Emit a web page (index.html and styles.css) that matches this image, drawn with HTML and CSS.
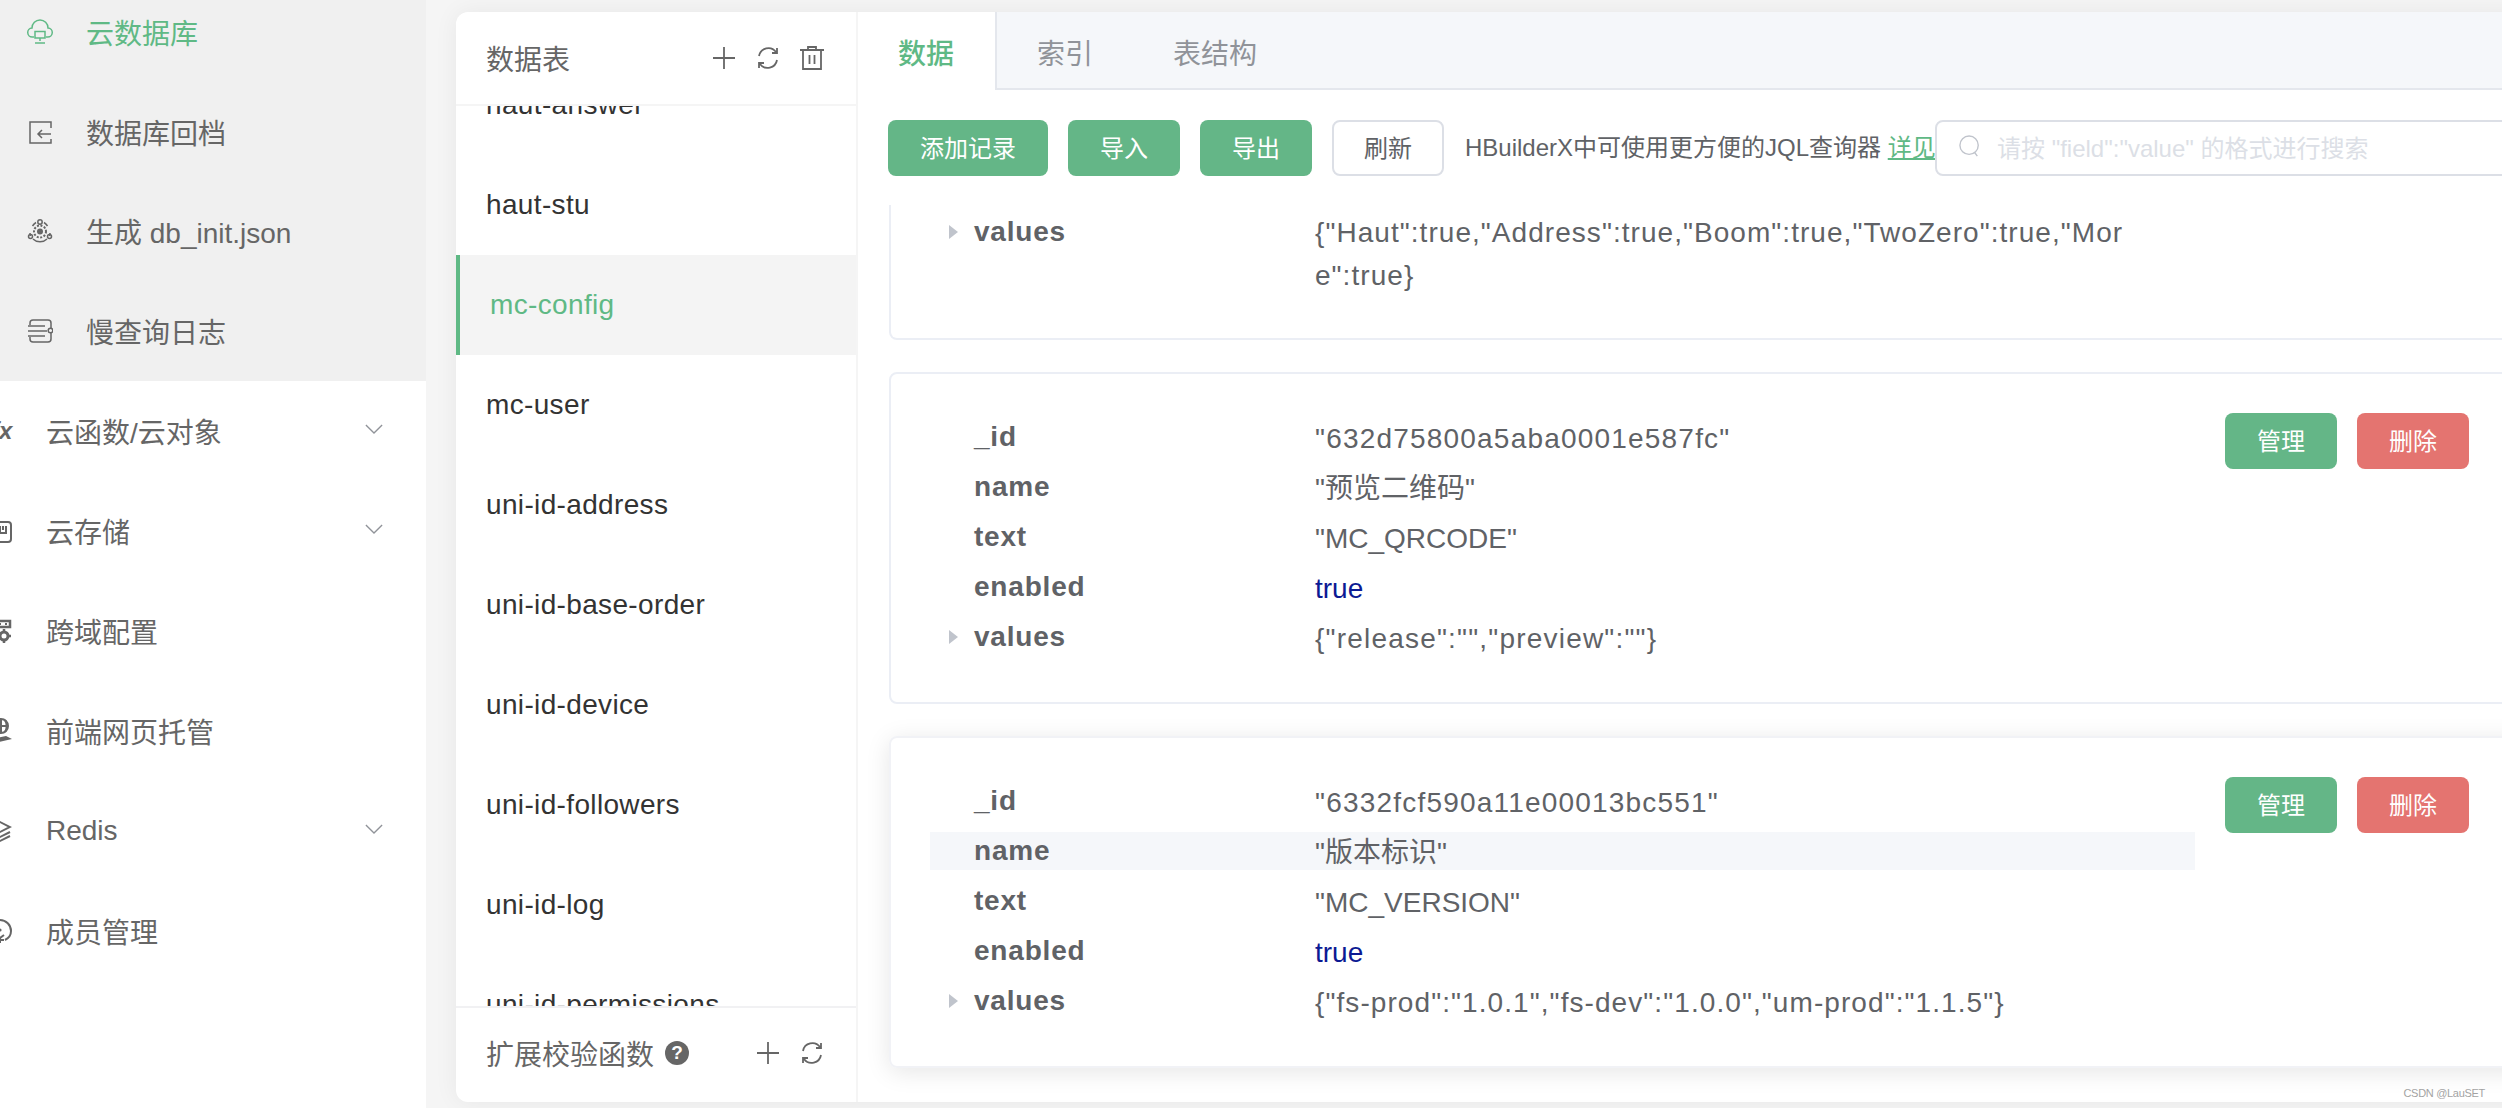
FILE: index.html
```html
<!DOCTYPE html>
<html lang="zh-CN">
<head>
    <meta charset="UTF-8">
    <title>云数据库</title>
    <link rel="stylesheet" href="styles.css">
</head>
<body>
    <div class="page">
        <!-- Left menu, scrolled a little in both directions -->
        <aside class="sidebar">
            <ul class="sub-menu">
                <li class="sub-item active">
                    <svg class="sub-icon" viewBox="0 0 26 26"><path d="M7 18H5.500a4.500 4.500 0 0 1-.5-9 8 8 0 0 1 16 0 4.500 4.500 0 0 1-.5 9H19"/><rect x="8" y="12.500" width="10" height="6.500"/><path d="M13 19v3M8 24h10"/></svg>
                    <span>云数据库</span>
                </li>
                <li class="sub-item">
                    <svg class="sub-icon" viewBox="0 0 26 26"><path d="M24 9V3H3v21h21v-4"/><path d="M24 15H11M15 11l-4 4 4 4"/></svg>
                    <span>数据库回档</span>
                </li>
                <li class="sub-item">
                    <svg class="sub-icon" viewBox="0 0 26 26"><path d="M5.500 8A10 10 0 0 1 9 4.500M17 4.500A10 10 0 0 1 20.500 8M3 15a10 10 0 0 0 .5 3M6 21a10 10 0 0 0 14 0M22.500 18a10 10 0 0 0 .5-3"/><circle cx="13" cy="4" r="2.200"/><circle cx="3.500" cy="18.500" r="2"/><circle cx="22.500" cy="18.500" r="2"/><circle cx="13" cy="13.500" r="6" stroke-dasharray="2 1.500" stroke-width="2"/><circle class="solid" cx="13" cy="13.500" r="3"/></svg>
                    <span>生成 db_init.json</span>
                </li>
                <li class="sub-item">
                    <svg class="sub-icon" viewBox="0 0 26 26"><path d="M3 7V5a3 3 0 0 1 3-3h15a3 3 0 0 1 3 3v5M24 15v6a3 3 0 0 1-3 3H6a3 3 0 0 1-3-3v-2M1 8h17M1 13h19M1 18h17"/><circle cx="23.500" cy="12.500" r="2.300"/></svg>
                    <span>慢查询日志</span>
                </li>
            </ul>
            <ul class="top-menu">
                <li class="top-item">
                    <span class="fx-icon">fx</span>
                    <span>云函数/云对象</span>
                    <svg class="chevron" viewBox="0 0 20 12"><path d="M1 1l9 9 9-9"/></svg>
                </li>
                <li class="top-item">
                    <svg class="top-icon" viewBox="0 0 26 26"><path d="M12 4h10a3 3 0 0 1 3 3v14a3 3 0 0 1-3 3H14M14 8v7h6V8M17 8v4"/></svg>
                    <span>云存储</span>
                    <svg class="chevron" viewBox="0 0 20 12"><path d="M1 1l9 9 9-9"/></svg>
                </li>
                <li class="top-item">
                    <svg class="top-icon" viewBox="0 0 26 26"><path class="thick" d="M10 3h14v6H10z"/><path d="M14 5v2M20 5v2"/><circle cx="18" cy="18" r="4" stroke-width="3"/><path class="thick" d="M18 11v3M18 22v3M12 18h2M22 18h3"/></svg>
                    <span>跨域配置</span>
                </li>
                <li class="top-item">
                    <svg class="top-icon" viewBox="0 0 26 26"><circle cx="15" cy="8" r="7"/><path d="M8 8h14M15 1v14M11 2a12 12 0 0 0 0 12M19 2a12 12 0 0 1 0 12"/><path class="solid" d="M6 21l14-3 6 3-18 4z"/></svg>
                    <span>前端网页托管</span>
                </li>
                <li class="top-item">
                    <svg class="top-icon" viewBox="0 0 26 26"><path d="M12 3l12 6-12 6L4 11M24 14l-12 6-8-4M24 18l-12 6-8-4"/></svg>
                    <span>Redis</span>
                    <svg class="chevron" viewBox="0 0 20 12"><path d="M1 1l9 9 9-9"/></svg>
                </li>
                <li class="top-item">
                    <svg class="top-icon" viewBox="0 0 26 26"><path d="M14 2a11 11 0 0 1 11 11c0 4-2 7-6 9"/><circle class="solid" cx="14" cy="12" r="1.600"/><path d="M10 17l4 3 4-3M14 20v5M10 22h8"/></svg>
                    <span>成员管理</span>
                </li>
            </ul>
        </aside>

        <main class="panel">
            <section class="tables">
                <header class="tables-head">
                    <span>数据表</span>
                    <div class="head-tools">
                        <svg class="tool" viewBox="0 0 24 24"><path d="M12 1v22M1 12h22"/></svg>
                        <svg class="tool" viewBox="0 0 24 24"><path d="M3 10a9.500 9.500 0 0 1 17-4M21 14a9.500 9.500 0 0 1-17 4M16 7h5V2M8 17H3v5"/></svg>
                        <svg class="tool" viewBox="0 0 24 24"><path d="M0 4h24M8 4V1h8v3M3 4v19h18V4M9.500 9v9M14.500 9v9"/></svg>
                    </div>
                </header>
                <div class="table-list">
                    <div class="table-scroll">
                        <div class="table-row">haut-answer</div>
                        <div class="table-row">haut-stu</div>
                        <div class="table-row active">mc-config</div>
                        <div class="table-row">mc-user</div>
                        <div class="table-row">uni-id-address</div>
                        <div class="table-row">uni-id-base-order</div>
                        <div class="table-row">uni-id-device</div>
                        <div class="table-row">uni-id-followers</div>
                        <div class="table-row">uni-id-log</div>
                        <div class="table-row">uni-id-permissions</div>
                    </div>
                </div>
                <footer class="tables-foot">
                    <span>扩展校验函数</span>
                    <span class="help">?</span>
                    <div class="head-tools foot-tools">
                        <svg class="tool" viewBox="0 0 24 24"><path d="M12 1v22M1 12h22"/></svg>
                        <svg class="tool" viewBox="0 0 24 24"><path d="M3 10a9.500 9.500 0 0 1 17-4M21 14a9.500 9.500 0 0 1-17 4M16 7h5V2M8 17H3v5"/></svg>
                    </div>
                </footer>
            </section>

            <section class="content">
                <nav class="tabs">
                    <div class="tab active">数据</div>
                    <div class="tab">索引</div>
                    <div class="tab">表结构</div>
                </nav>

                <div class="toolbar">
                    <button class="btn btn-green btn-add">添加记录</button>
                    <button class="btn btn-green">导入</button>
                    <button class="btn btn-green">导出</button>
                    <button class="btn btn-plain">刷新</button>
                    <div class="notice">HBuilderX中可使用更方便的JQL查询器 <a href="#">详见</a></div>
                    <div class="search">
                        <svg class="search-icon" viewBox="0 0 24 26"><circle cx="11" cy="11" r="10"/><path d="M17 19l3 4"/></svg>
                        <span>请按 "field":"value" 的格式进行搜索</span>
                    </div>
                </div>

                <div class="records">
                    <article class="record clipped">
                        <div class="fields">
                            <div class="field tall">
                                <i class="arrow"></i><b>values</b>
                                <span class="val">{"Haut":true,"Address":true,"Boom":true,"TwoZero":true,"More":true}</span>
                            </div>
                        </div>
                    </article>

                    <article class="record">
                        <div class="fields">
                            <div class="field"><i></i><b>_id</b><span class="val wide">"632d75800a5aba0001e587fc"</span></div>
                            <div class="field"><i></i><b>name</b><span class="val">"预览二维码"</span></div>
                            <div class="field"><i></i><b>text</b><span class="val">"MC_QRCODE"</span></div>
                            <div class="field"><i></i><b>enabled</b><span class="val bool">true</span></div>
                            <div class="field"><i class="arrow"></i><b>values</b><span class="val wide">{"release":"","preview":""}</span></div>
                        </div>
                        <div class="record-btns">
                            <button class="btn btn-green">管理</button>
                            <button class="btn btn-red">删除</button>
                        </div>
                    </article>

                    <article class="record hover">
                        <div class="fields">
                            <div class="field"><i></i><b>_id</b><span class="val wide">"6332fcf590a11e00013bc551"</span></div>
                            <div class="field current"><i></i><b>name</b><span class="val">"版本标识"</span></div>
                            <div class="field"><i></i><b>text</b><span class="val">"MC_VERSION"</span></div>
                            <div class="field"><i></i><b>enabled</b><span class="val bool">true</span></div>
                            <div class="field"><i class="arrow"></i><b>values</b><span class="val wide-s">{"fs-prod":"1.0.1","fs-dev":"1.0.0","um-prod":"1.1.5"}</span></div>
                        </div>
                        <div class="record-btns">
                            <button class="btn btn-green">管理</button>
                            <button class="btn btn-red">删除</button>
                        </div>
                    </article>
                </div>
            </section>
        </main>
    </div>
    <div class="watermark">CSDN @LauSET</div>
</body>
</html>
```

FILE: styles.css
```css
* {
    margin: 0;
    padding: 0;
    box-sizing: border-box;
}

html, body {
    height: 100%;
    overflow: hidden;
}

body {
    font-family: "Liberation Sans", "Noto Sans CJK SC", sans-serif;
    font-size: 28px;
    color: #666;
    background: #f5f5f5;
}

ul {
    list-style: none;
}

svg {
    fill: none;
    stroke: currentColor;
    stroke-width: 1.500;
    flex: none;
}

svg .solid {
    fill: currentColor;
    stroke: none;
}

svg .thick {
    stroke-width: 2.500;
}

.page {
    display: flex;
    height: 1108px;
    width: 2560px;
}

/* Left menu */
.sidebar {
    flex: none;
    width: 426px;
    background: #fff;
    overflow: hidden;
}

.sub-menu {
    background: #f0f0f0;
    margin-top: -18px;
}

.sub-item {
    display: flex;
    align-items: center;
    height: 99.800px;
    padding-left: 27px;
    gap: 33px;
}

.sub-item.active {
    color: #5fb985;
}

.sub-icon {
    width: 26px;
    height: 26px;
}

.top-item {
    display: flex;
    align-items: center;
    height: 100px;
    padding-left: 46px;
    position: relative;
}

.top-icon {
    position: absolute;
    left: -14px;
    width: 26px;
    height: 26px;
    stroke-width: 2;
}

.fx-icon {
    position: absolute;
    left: -9px;
    font-size: 24px;
    font-weight: 700;
    font-style: italic;
}

.chevron {
    position: absolute;
    left: 365px;
    top: 43px;
    width: 18px;
    height: 11px;
    color: #909399;
}

/* Main card */
.panel {
    flex: none;
    display: flex;
    width: 2100px;
    height: 1090px;
    margin: 12px 0 0 30px;
    background: #fff;
    border-radius: 12px 0 0 12px;
    box-shadow: 0 0 24px rgba(0, 0, 0, 0.06);
}

/* Table list column */
.tables {
    flex: none;
    display: flex;
    flex-direction: column;
    width: 402px;
    border-right: 2px solid #f5f5f5;
}

.tables-head {
    flex: none;
    display: flex;
    align-items: center;
    justify-content: space-between;
    height: 94px;
    padding: 0 32px 0 30px;
    border-bottom: 2px solid #f5f5f5;
}

.head-tools {
    display: flex;
    gap: 20px;
}

.tool {
    width: 24px;
    height: 24px;
    stroke-width: 1.800;
}

.table-list {
    flex: 1;
    overflow: hidden;
}

.table-scroll {
    margin-top: -51px;
}

.table-row {
    height: 100px;
    line-height: 100px;
    padding-left: 30px;
    color: #333;
    letter-spacing: 0.350px;
}

.table-row.active {
    padding-left: 30px;
    border-left: 4px solid #5fb985;
    color: #5fb985;
    background: #f4f4f4;
}

.tables-foot {
    flex: none;
    display: flex;
    align-items: center;
    height: 96px;
    padding: 0 32px 4px 30px;
    border-top: 2px solid #f1f1f3;
}

.help {
    width: 24px;
    height: 24px;
    margin-left: 11px;
    border-radius: 50%;
    background: #666;
    color: #fff;
    font-size: 19px;
    font-weight: 700;
    line-height: 24px;
    text-align: center;
}

.foot-tools {
    margin-left: auto;
}

/* Right column */
.content {
    flex: 1;
    min-width: 0;
}

.tabs {
    display: flex;
    height: 78px;
    background: #f5f7fa;
    border-bottom: 2px solid #e4e7ed;
}

.tab {
    padding: 0 40px;
    height: 78px;
    line-height: 85px;
    color: #909399;
}

.tab.active {
    width: 139px;
    background: #fff;
    color: #5fb985;
    font-weight: 500;
    border-right: 2px solid #e4e7ed;
}

.toolbar {
    display: flex;
    align-items: center;
    gap: 20px;
    padding: 30px 0 29px 30px;
}

.btn {
    flex: none;
    width: 112px;
    height: 56px;
    padding-bottom: 3px;
    border: 0;
    border-radius: 8px;
    font-family: inherit;
    font-size: 24px;
    color: #fff;
}

.btn-add {
    width: 160px;
}

.btn-green {
    background: #64b687;
}

.btn-red {
    background: #e47470;
}

.btn-plain {
    background: #fff;
    border: 2px solid #dcdfe6;
    color: #606266;
}

.notice {
    flex: none;
    width: 469px;
    margin: -5px 0 0 1px;
    font-size: 24px;
    color: #606266;
    white-space: nowrap;
}

.notice a {
    color: #5fb985;
}

.search {
    flex: none;
    display: flex;
    align-items: center;
    gap: 16px;
    width: 700px;
    height: 56px;
    margin-left: -19px;
    padding: 0 0 3px 22px;
    border: 2px solid #dcdfe6;
    border-radius: 8px;
    font-size: 24px;
    color: #dcdfe6;
}

.search-icon {
    width: 22px;
    height: 24px;
    color: #c0c4cc;
}

/* Records */
.records {
    height: 897px;
    overflow: hidden;
    padding: 0 0 0 31px;
}

.record {
    display: flex;
    gap: 30px;
    width: 1640px;
    margin-bottom: 32px;
    padding: 44px 39px 46px;
    border: 2px solid #ebeef5;
    border-radius: 8px;
}

.record.clipped {
    border-top: 0;
    border-radius: 0 0 8px 8px;
    padding: 8px 39px 44px;
}

.record.hover {
    border-color: #f1f2f6;
    box-shadow: 0 4px 24px rgba(0, 0, 0, 0.1);
}

.fields {
    flex: none;
    width: 1265px;
}

.field {
    display: grid;
    grid-template-columns: 19px 9px 16px 341px 815px;
    align-items: center;
    min-height: 38px;
    line-height: 38px;
    color: #606266;
}

.field + .field {
    margin-top: 12px;
}

.field.current {
    background: #f5f7fa;
}

.field i {
    grid-column: 2;
}

.field b {
    grid-column: 4;
    letter-spacing: 0.800px;
}

.field .val {
    grid-column: 5;
    height: 38px;
    padding-top: 2px;
}

.field .val.wide {
    letter-spacing: 1.200px;
}

.field .val.wide-s {
    letter-spacing: 1.080px;
}

.field.tall {
    align-items: start;
}

.field.tall .arrow {
    margin-top: 12px;
}

.field.tall .val {
    height: auto;
    padding-top: 0;
    line-height: 43px;
    margin: -2px 0 -3px;
    letter-spacing: 1.050px;
    word-break: break-all;
}

.arrow {
    display: block;
    width: 0;
    height: 0;
    border-left: 9px solid #c0c4cc;
    border-top: 7px solid transparent;
    border-bottom: 7px solid transparent;
}

.bool {
    color: #0c1a93;
}

.record-btns {
    display: flex;
    gap: 20px;
    margin-top: -5px;
}

.watermark {
    position: absolute;
    right: 17px;
    top: 1087px;
    font-size: 11px;
    letter-spacing: -0.300px;
    color: #a3a3a3;
}
```
